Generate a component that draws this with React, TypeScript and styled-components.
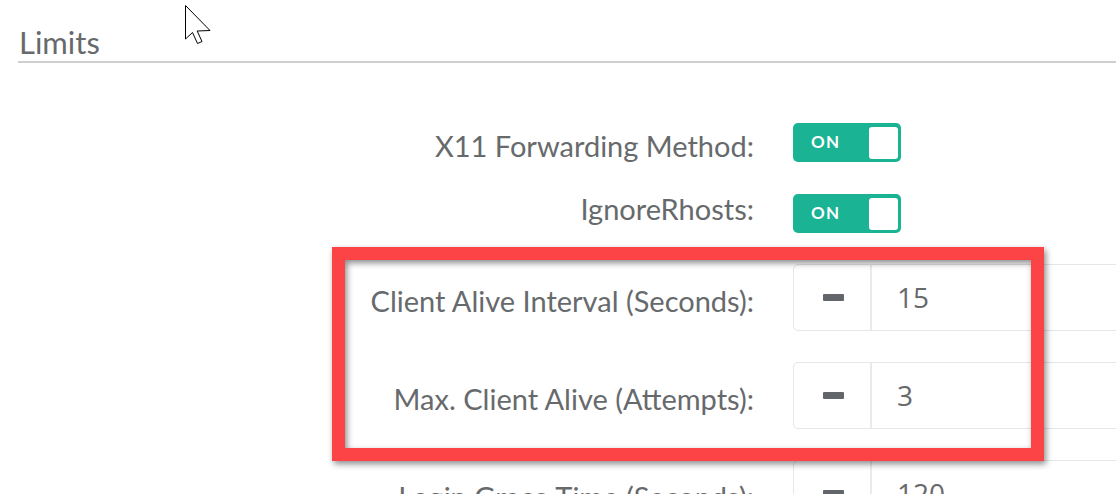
import React from "react";
import styled, { createGlobalStyle } from "styled-components";

const Global = createGlobalStyle`
  html, body { margin: 0; padding: 0; background: #ffffff; }
  body { overflow: hidden; width: 1116px; height: 494px; font-family: "Lato", "Open Sans", sans-serif; }
`;

const Page = styled.div`
  position: relative;
  width: 1116px;
  height: 494px;
  overflow: hidden;
  background: #fff;
`;

const Heading = styled.h3`
  margin: 0 0 0 18px;
  padding: 25px 0 2px 1px;
  font-family: "Lato", sans-serif;
  font-weight: 400;
  font-size: 31px;
  line-height: 34px;
  color: #676a6c;
  border-bottom: 2px solid #cfcfcf;
`;

const Form = styled.div`
  display: flex;
  flex-direction: column;
  gap: 31px;
  padding-top: 60px;
`;

const Row = styled.div`
  display: flex;
  align-items: flex-start;
  gap: 39px;
`;

const Label = styled.label<{ $offset: number }>`
  flex: 0 0 754px;
  box-sizing: border-box;
  text-align: right;
  margin-top: ${(p) => p.$offset}px;
  font-family: "Lato", sans-serif;
  font-size: 29px;
  line-height: 35px;
  color: #676a6c;
  white-space: nowrap;
`;

const Toggle = styled.div`
  flex: 0 0 auto;
  width: 108px;
  height: 39px;
  box-sizing: border-box;
  border-radius: 5px;
  background: #1ab394;
  display: flex;
  align-items: center;
  justify-content: space-between;
  padding: 3px 3px 3px 18px;
`;

const ToggleText = styled.span`
  font-family: "Lato", "Open Sans", sans-serif;
  font-weight: 700;
  font-size: 17px;
  color: #ffffff;
  letter-spacing: 1.2px;
  margin-top: -3px;
`;

const Knob = styled.span`
  width: 29px;
  height: 32px;
  border-radius: 3px;
  background: #ffffff;
`;

const NumberGroup = styled.div`
  flex: 0 0 420px;
  display: flex;
  height: 67px;
  box-sizing: border-box;
  border: 1px solid #e5e6e7;
  border-radius: 5px;
  background: #fff;
`;

const StepButton = styled.div`
  flex: 0 0 78px;
  display: flex;
  align-items: center;
  justify-content: center;
  border-right: 2px solid #e9eaeb;
  padding-left: 3px;
  box-sizing: border-box;
`;

const MinusBar = styled.span`
  width: 21px;
  height: 7px;
  border-radius: 1px;
  background: #62666a;
`;

const Value = styled.div`
  display: flex;
  align-items: center;
  padding-left: 25px;
  font-family: "Open Sans", sans-serif;
  font-weight: 400;
  font-size: 28px;
  color: #676a6c;
  margin-top: -2px;
`;

const Highlight = styled.div`
  position: absolute;
  left: 332px;
  top: 247px;
  width: 712px;
  height: 214px;
  box-sizing: border-box;
  border: 13px solid #fc4447;
  filter: drop-shadow(2px 3px 3px rgba(0, 0, 0, 0.45));
  pointer-events: none;
`;

const Cursor = styled.svg`
  position: absolute;
  left: 184px;
  top: 4px;
`;

const rows: { label: string; kind: "toggle" | "number"; value?: string; offset: number }[] = [
  { label: "X11 Forwarding Method:", kind: "toggle", offset: 5 },
  { label: "IgnoreRhosts:", kind: "toggle", offset: -3 },
  { label: "Client Alive Interval (Seconds):", kind: "number", value: "15", offset: 19 },
  { label: "Max. Client Alive (Attempts):", kind: "number", value: "3", offset: 19 },
  { label: "Login Grace Time (Seconds):", kind: "number", value: "120", offset: 19 },
];

export default function App() {
  return (
    <Page>
      <Global />
      <Heading>Limits</Heading>
      <Form>
        {rows.map((r) => (
          <Row key={r.label}>
            <Label $offset={r.offset}>{r.label}</Label>
            {r.kind === "toggle" ? (
              <Toggle>
                <ToggleText>ON</ToggleText>
                <Knob />
              </Toggle>
            ) : (
              <NumberGroup>
                <StepButton>
                  <MinusBar />
                </StepButton>
                <Value>{r.value}</Value>
              </NumberGroup>
            )}
          </Row>
        ))}
      </Form>
      <Highlight />
      <Cursor width="30" height="44" viewBox="0 0 30 44">
        <path
          d="M1.5 1.5 L1.5 35 L8.5 28.5 L13.5 39.5 L18 37.5 L13.2 27 L26 26.5 Z"
          fill="#ffffff"
          stroke="#000000"
          strokeWidth="1"
          strokeLinejoin="miter"
        />
      </Cursor>
    </Page>
  );
}
